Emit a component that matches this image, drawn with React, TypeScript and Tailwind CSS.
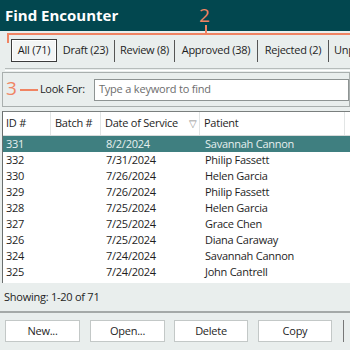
import React from "react";

const rows = [
  ["331", "8/2/2024", "Savannah Cannon"],
  ["332", "7/31/2024", "Philip Fassett"],
  ["330", "7/26/2024", "Helen Garcia"],
  ["329", "7/26/2024", "Philip Fassett"],
  ["328", "7/25/2024", "Helen Garcia"],
  ["327", "7/25/2024", "Grace Chen"],
  ["326", "7/25/2024", "Diana Caraway"],
  ["324", "7/24/2024", "Savannah Cannon"],
  ["325", "7/24/2024", "John Cantrell"],
];

export default function App() {
  return (
    <div
      className="relative w-[350px] h-[350px] overflow-hidden bg-[#e9eeed] text-[#1e1e1e]"
      style={{ fontFamily: '"Open Sans", "Noto Sans", sans-serif' }}
    >
      {/* Title */}
      <div className="h-[31px] bg-[#02474f] text-white font-bold text-[15px] pl-[5px] flex items-center">
        Find Encounter
      </div>

      {/* Annotation 2 */}
      <div className="absolute left-[199px] top-[4px] text-[19px] leading-[22px] text-[#f08463]">2</div>
      <div className="absolute left-[205px] top-[25px] w-[2px] h-[9px] bg-[#f08463]" />
      <div className="absolute left-[7px] top-[33px] right-0 h-[2px] bg-[#f08463]" />
      <div className="absolute left-[7px] top-[33px] w-[2px] h-[10px] bg-[#f08463]" />

      {/* Tabs */}
      <div className="flex items-center h-[23px] mt-[8px] pl-[11px] text-[11px] tracking-[-0.25px] whitespace-nowrap">
        <div className="shrink-0 h-[23px] w-[46px] justify-center flex items-center border border-[#3c3c3c] bg-[#f3f5f5] shadow-[inset_0_0_0_1px_#ffffff]">
          All (71)
        </div>
        <div className="shrink-0 w-[57px] h-[23px] flex items-center justify-center">Draft (23)</div>
        <div className="shrink-0 w-px h-[22px] bg-[#555]" />
        <div className="shrink-0 w-[59px] h-[23px] flex items-center justify-center">Review (8)</div>
        <div className="shrink-0 w-px h-[22px] bg-[#555]" />
        <div className="shrink-0 w-[82px] h-[23px] flex items-center justify-center">Approved (38)</div>
        <div className="shrink-0 w-px h-[22px] bg-[#555]" />
        <div className="shrink-0 w-[70px] h-[23px] flex items-center justify-center">Rejected (2)</div>
        <div className="shrink-0 w-px h-[22px] bg-[#555]" />
        <div className="shrink-0 pl-[5px] h-[23px] flex items-center">Unprocessed (0)</div>
      </div>

      {/* Rule */}
      <div className="mt-[6px] ml-[5px] h-[3px] border-t border-[#b6bcbb] border-b border-b-white" />

      {/* Look For group */}
      <div className="relative mt-[1px] ml-[2px] h-[35px] border border-[#a9afae] flex items-center">
        <div className="text-[19px] leading-none text-[#f08463] ml-[3px] -mt-[2px]">3</div>
        <div className="w-[18px] h-[2px] bg-[#f08463] ml-[3px]" />
        <div className="text-[11px] tracking-[-0.25px] ml-[2px]">Look For:</div>
        <div className="ml-[9px] flex-1 h-[22px] bg-white border border-[#8e9493] flex items-center pl-[4px] text-[11px] tracking-[-0.2px] text-[#6d6d6d]">
          Type a keyword to find
        </div>
      </div>

      {/* List */}
      <div className="mt-[4px] ml-[2px] h-[172px] bg-white border-l border-t border-[#7a7f7e] border-l-[#6a6f6e] text-[11px] tracking-[-0.25px]">
        <div className="flex h-[24px] items-center border-b border-[#d7dbdb]">
          <div className="shrink-0 w-[48px] h-full flex items-center pl-[3px] border-r border-[#e2e5e5]">ID #</div>
          <div className="shrink-0 w-[50px] h-full flex items-center pl-[4px] border-r border-[#e2e5e5]">Batch #</div>
          <div className="shrink-0 w-[99px] h-full flex items-center pl-[4px] border-r border-[#e2e5e5] relative">
            Date of Service
            <span className="absolute right-[2px] top-[4px] text-[10px] text-[#8a8a8a]">▽</span>
          </div>
          <div className="shrink-0 w-[145px] h-full flex items-center pl-[4px] border-r border-[#e2e5e5]">Patient</div>
        </div>
        {rows.map((r, i) => (
          <div
            key={r[0]}
            className={
              "flex h-[16px] items-center " +
              (i === 0 ? "bg-[#3f7f80] text-[#e6f0ef]" : "")
            }
          >
            <div className="shrink-0 w-[48px] pl-[3px]">{r[0]}</div>
            <div className="shrink-0 w-[50px]" />
            <div className="shrink-0 w-[99px] pl-[5px]">{r[1]}</div>
            <div className="pl-[5px]">{r[2]}</div>
          </div>
        ))}
      </div>

      {/* Status */}
      <div className="h-[28px] flex items-center pl-[4px] text-[11px] tracking-[-0.25px]">Showing: 1-20 of 71</div>
      <div className="h-[2px] bg-[#a4a9a8]" />

      {/* Buttons */}
      <div className="flex items-center mt-[7px] pl-[5px] text-[11px] tracking-[-0.25px]">
        <button className="shrink-0 w-[75px] h-[22px] bg-white border border-[#c3c8c7]">New...</button>
        <button className="shrink-0 ml-[10px] w-[75px] h-[22px] bg-white border border-[#c3c8c7]">Open...</button>
        <button className="shrink-0 ml-[9px] w-[74px] h-[22px] bg-white border border-[#c3c8c7]">Delete</button>
        <button className="shrink-0 ml-[10px] w-[74px] h-[22px] bg-white border border-[#c3c8c7]">Copy</button>
        <div className="shrink-0 ml-[11px] w-px h-[22px] bg-[#777]" />
      </div>
    </div>
  );
}
